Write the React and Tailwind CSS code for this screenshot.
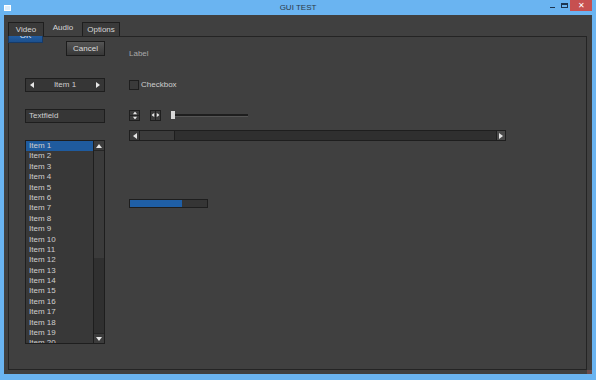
import React from 'react';

const font = { fontFamily: '"Liberation Sans", Arial, sans-serif' };

function Tri({ dir, className = '' }) {
  // tiny arrow glyph used by all the scroll/spin buttons
  const pts = {
    up: '0,4 3,0 6,4',
    down: '0,0 6,0 3,4',
    left: '4,0 4,6 0,3',
    right: '0,0 0,6 4,3',
  }[dir];
  const vertical = dir === 'up' || dir === 'down';
  return (
    <svg
      width={vertical ? 6 : 4}
      height={vertical ? 4 : 6}
      viewBox={vertical ? '0 0 6 4' : '0 0 4 6'}
      className={className}
    >
      <polygon points={pts} fill="#e6e6e6" />
    </svg>
  );
}

function Button({ children, primary, className = '' }) {
  const look = primary
    ? 'border-[#173a66] bg-gradient-to-b from-[#2a6cb5] to-[#1c508e] text-[#e8eef6]'
    : 'border-[#1c1c1c] bg-gradient-to-b from-[#555] to-[#383838] text-[#dcdcdc]';
  return (
    <div className={`flex items-center justify-center border text-[8px] ${look} ${className}`}>
      {children}
    </div>
  );
}

function ListBox() {
  const items = Array.from({ length: 20 }, (_, i) => `Item ${i + 1}`);
  return (
    <div className="flex h-[204px] w-[80px] border border-[#1e1e1e] bg-[#383838]">
      <div className="flex-1 overflow-hidden">
        {items.map((it, i) => (
          <div
            key={it}
            className={`h-[10.4px] pl-[3px] text-[8px] leading-[10.4px] text-[#cfcfcf] ${i === 0 ? 'bg-[#1f5b9e]' : ''}`}
          >
            {it}
          </div>
        ))}
      </div>
      <div className="flex w-[11px] flex-col border-l border-[#1e1e1e]">
        <div className="flex h-[10px] items-center justify-center border-b border-[#262626] bg-[#3c3c3c]">
          <Tri dir="up" />
        </div>
        <div className="h-[107px] bg-[#3b3b3b]" />
        <div className="flex-1 bg-[#303030]" />
        <div className="flex h-[10px] items-center justify-center border-t border-[#262626] bg-[#3c3c3c]">
          <Tri dir="down" />
        </div>
      </div>
    </div>
  );
}

export default function App() {
  return (
    <div className="flex h-[380px] w-[596px] flex-col bg-[#6ab4f1]" style={font}>
      {/* title bar */}
      <div className="relative flex h-[15px] items-center">
        <div className="ml-[4px] h-[6px] w-[7px] border border-white bg-[#dfeefb]" />
        <div className="absolute left-0 right-0 top-0 flex h-[15px] items-center justify-center text-[8px] text-[#2c3a48]">
          GUI TEST
        </div>
        <div className="ml-auto flex h-full items-start">
          <div className="flex h-[10px] w-[12px] items-end justify-center pb-[2px]">
            <div className="h-[1px] w-[5px] bg-[#1d3550]" />
          </div>
          <div className="flex h-[10px] w-[12px] items-center justify-center">
            <div className="h-[5px] w-[7px] border border-t-2 border-[#1d3550]" />
          </div>
          <div className="mr-[4px] flex h-[11px] w-[22px] items-center justify-center bg-[#c75050] text-[8px] leading-none text-white">
            ✕
          </div>
        </div>
      </div>

      {/* client area */}
      <div className="relative mx-[4px] mb-[6px] flex flex-1 flex-col bg-[#404040]">
        {/* OK button partially hidden under the tab strip */}
        <Button primary className="absolute left-[4px] top-[13px] z-10 h-[15px] w-[35px]">
          OK
        </Button>

        {/* tabs */}
        <div className="relative z-20 ml-[4px] flex h-[21px] items-end text-[8px] text-[#d6d6d6]">
          <div className="flex h-[14px] w-[36px] items-center justify-center border border-b-0 border-[#1e1e1e] bg-[#3a3a3a]">
            Video
          </div>
          <div className="flex h-[17px] w-[38px] items-center justify-center bg-[#404040]">
            Audio
          </div>
          <div className="flex h-[14px] w-[38px] items-center justify-center border border-b-0 border-[#1e1e1e] bg-[#3a3a3a]">
            Options
          </div>
        </div>

        {/* tab page */}
        <div className="mb-[4px] ml-[4px] mr-[5px] flex flex-1 border border-[#242424] bg-[#404040] pl-[16px] text-[8px] text-[#cfcfcf]">
          {/* left column */}
          <div className="flex flex-col">
            <Button className="ml-[41px] mt-[4px] h-[15px] w-[39px]">Cancel</Button>

            <div className="mt-[22px] flex h-[14px] w-[80px] items-center border border-[#1e1e1e] bg-[#363636] px-[4px]">
              <Tri dir="left" />
              <div className="flex-1 text-center">Item 1</div>
              <Tri dir="right" />
            </div>

            <div className="mt-[17px] flex h-[14px] w-[80px] items-center border border-[#1e1e1e] bg-[#363636] pl-[3px]">
              Textfield
            </div>

            <div className="mt-[17px]">
              <ListBox />
            </div>
          </div>

          {/* right column */}
          <div className="ml-[24px] flex flex-col">
            <div className="mt-[12px] h-[10px] leading-[10px] text-[#a9a9a9]">Label</div>

            <div className="mt-[20px] flex items-center gap-[2px]">
              <div className="h-[10px] w-[10px] border border-[#1e1e1e] bg-[#3a3a3a]" />
              <span>Checkbox</span>
            </div>

            <div className="mt-[18px] flex h-[12px] items-center">
              <div className="flex h-[11px] w-[11px] flex-col border border-[#1e1e1e] bg-[#3c3c3c]">
                <div className="flex flex-1 items-center justify-center border-b border-[#222]">
                  <Tri dir="up" className="scale-75" />
                </div>
                <div className="flex flex-1 items-center justify-center">
                  <Tri dir="down" className="scale-75" />
                </div>
              </div>
              <div className="ml-[10px] flex h-[11px] w-[11px] border border-[#1e1e1e] bg-[#3c3c3c]">
                <div className="flex flex-1 items-center justify-center border-r border-[#222]">
                  <Tri dir="left" className="scale-75" />
                </div>
                <div className="flex flex-1 items-center justify-center">
                  <Tri dir="right" className="scale-75" />
                </div>
              </div>
              <div className="ml-[10px] flex items-center">
                <div className="h-[8px] w-[4px] bg-[#d8d8d8]" />
                <div className="h-[3px] w-[73px] border-b border-[#555] bg-[#1e1e1e]" />
              </div>
            </div>

            <div className="mt-[9px] flex h-[11px] w-[377px] border border-[#1e1e1e] bg-[#2f2f2f]">
              <div className="flex w-[10px] items-center justify-center border-r border-[#1e1e1e] bg-[#3c3c3c]">
                <Tri dir="left" />
              </div>
              <div className="w-[35px] border-r border-[#1e1e1e] bg-[#3b3b3b]" />
              <div className="flex-1" />
              <div className="flex w-[9px] items-center justify-center border-l border-[#1e1e1e] bg-[#4a4a4a]">
                <Tri dir="right" />
              </div>
            </div>

            <div className="mt-[58px] flex h-[9px] w-[79px] border border-[#1e1e1e] bg-[#353535]">
              <div className="w-[52px] bg-[#1f5fa6]" />
            </div>
          </div>
        </div>

        {/* resize grip */}
        <div className="absolute bottom-0 right-0 h-[4px] w-[5px] bg-[#6a4a4a]" />
      </div>
    </div>
  );
}
